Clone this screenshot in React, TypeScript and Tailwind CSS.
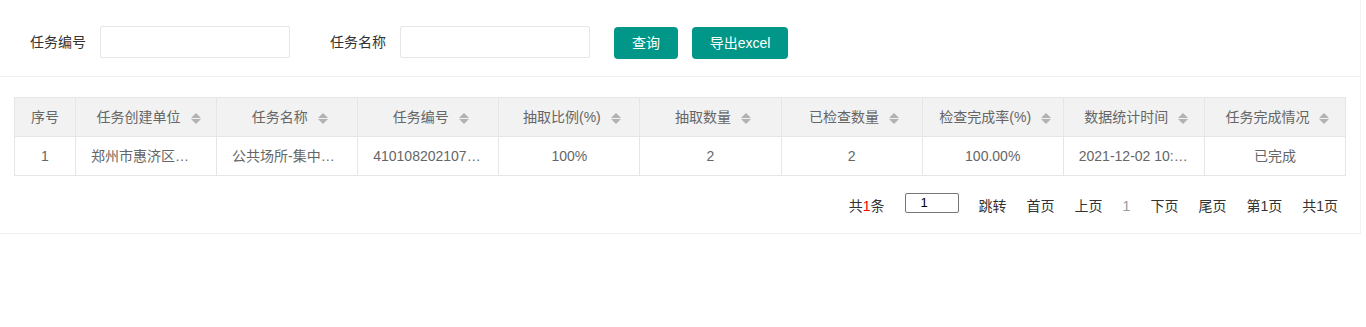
import React from 'react';

const font = { fontFamily: '"Liberation Sans", "Noto Sans CJK SC", sans-serif' };

const columns = [
  { title: '序号', sort: false },
  { title: '任务创建单位', sort: true },
  { title: '任务名称', sort: true },
  { title: '任务编号', sort: true },
  { title: '抽取比例(%)', sort: true },
  { title: '抽取数量', sort: true },
  { title: '已检查数量', sort: true },
  { title: '检查完成率(%)', sort: true },
  { title: '数据统计时间', sort: true },
  { title: '任务完成情况', sort: true },
];

const rows = [
  [
    '1',
    '郑州市惠济区卫生健康委员会',
    '公共场所-集中空调通风系统检查',
    '4101082021070001',
    '100%',
    '2',
    '2',
    '100.00%',
    '2021-12-02 10:30:00',
    '已完成',
  ],
];

const SortIcon: React.FC = () => (
  <span className="ml-[5px] inline-block w-[10px]">
    <svg width="10" height="11" viewBox="0 0 10 11" className="relative left-[5px] top-[1px]">
      <polygon points="0,5 5,0 10,5" fill="#b2b2b2" />
      <polygon points="0,6 10,6 5,11" fill="#b2b2b2" />
    </svg>
  </span>
);

const App: React.FC = () => {
  return (
    <div className="min-h-[327px] bg-white text-[14px] text-[#333]" style={font}>
      <div className="mr-[5px] border-r border-[#f3f3f3]">
        {/* 搜索区 */}
        <div className="flex items-start border-b border-[#f0f0f0] pl-[30px] pt-[26px] pb-[17px]">
          <label className="leading-[32px]">任务编号</label>
          <input className="ml-[14px] h-[32px] w-[190px] rounded-[2px] border border-[#e6e6e6] px-[10px] outline-none" />
          <label className="ml-[40px] leading-[32px]">任务名称</label>
          <input className="ml-[14px] h-[32px] w-[190px] rounded-[2px] border border-[#e6e6e6] px-[10px] outline-none" />
          <button className="ml-[24px] mt-[1px] h-[32px] w-[64px] rounded-[4px] bg-[#009688] text-white">查询</button>
          <button className="ml-[14px] mt-[1px] h-[32px] w-[96px] rounded-[4px] bg-[#009688] text-white">导出excel</button>
        </div>

        {/* 表格区 */}
        <div className="border-b border-[#f0f0f0] px-[14px] pt-[20px] pb-[17px]">
          <table className="w-full table-fixed border-collapse text-[#666]">
            <colgroup>
              <col className="w-[61px]" />
            </colgroup>
            <thead>
              <tr className="bg-[#f2f2f2]">
                {columns.map((c) => (
                  <th key={c.title} className="h-[39px] border border-[#e6e6e6] px-[15px] text-center font-normal whitespace-nowrap">
                    <span className="inline-flex items-center">
                      {c.title}
                      {c.sort && <SortIcon />}
                    </span>
                  </th>
                ))}
              </tr>
            </thead>
            <tbody>
              {rows.map((r, i) => (
                <tr key={i}>
                  {r.map((v, j) => (
                    <td key={j} className="h-[39px] border border-[#e6e6e6] px-[15px] text-center">
                      <div className="truncate">{v}</div>
                    </td>
                  ))}
                </tr>
              ))}
            </tbody>
          </table>

          <div className="mt-[17px] flex items-start justify-end gap-[20px] pr-[8px] leading-[20px]">
            <span className="mt-[3px]">
              共<span className="text-[#ff0000]">1</span>条
            </span>
            <input
              defaultValue="1"
              className="h-[20px] w-[54px] rounded-[2px] border border-[#767676] pl-[15px] text-[13px] text-black outline-none"
            />
            <span className="mt-[3px]">跳转</span>
            <span className="mt-[3px]">首页</span>
            <span className="mt-[3px]">上页</span>
            <span className="mt-[3px] text-[#999]">1</span>
            <span className="mt-[3px]">下页</span>
            <span className="mt-[3px]">尾页</span>
            <span className="mt-[3px]">第1页</span>
            <span className="mt-[3px]">共1页</span>
          </div>
        </div>
      </div>
    </div>
  );
};

export default App;
